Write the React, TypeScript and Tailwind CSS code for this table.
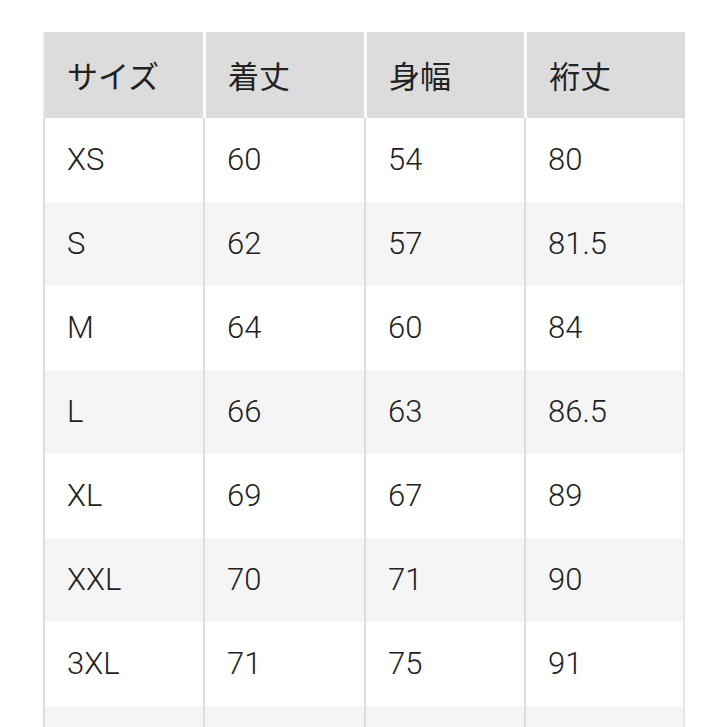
const header = ["サイズ", "着丈", "身幅", "裄丈"]

const rows = [
  ["XS", "60", "54", "80"],
  ["S", "62", "57", "81.5"],
  ["M", "64", "60", "84"],
  ["L", "66", "63", "86.5"],
  ["XL", "69", "67", "89"],
  ["XXL", "70", "71", "90"],
  ["3XL", "71", "75", "91"],
  ["", "", "", ""],
]

export default function App() {
  return (
    <div className="h-[727px] w-[727px] overflow-hidden bg-white pt-[32px] pl-[43px]">
      <div className="w-[642px] text-[#222]" style={{ fontFamily: "Roboto, 'Noto Sans CJK JP', sans-serif" }}>
        <div className="grid grid-cols-[160px_161px_160px_161px]">
          {header.map((h, i) => (
            <div
              key={h}
              className={`flex h-[86px] items-center bg-[#dcdcdc] pl-[22px] text-[31px] font-['Noto_Sans_CJK_JP',sans-serif] ${
                i > 0 ? "border-l-[3px] border-white" : "border-l-[2px] border-[#e6e6e6]"
              }`}
            >
              {h}
            </div>
          ))}
        </div>
        {rows.map((r, ri) => (
          <div
            key={ri}
            className={`grid grid-cols-[160px_161px_160px_161px] ${ri % 2 === 1 ? "bg-[#f5f5f5]" : "bg-white"}`}
          >
            {r.map((c, ci) => (
              <div
                key={ci}
                className={`flex h-[84px] items-center border-l-[2px] border-[#dedede] pl-[22px] text-[31px] font-light ${
                  ci === 3 ? "border-r-[2px] border-r-[#e6e6e6]" : ""
                }`}
              >
                {c}
              </div>
            ))}
          </div>
        ))}
      </div>
    </div>
  )
}
